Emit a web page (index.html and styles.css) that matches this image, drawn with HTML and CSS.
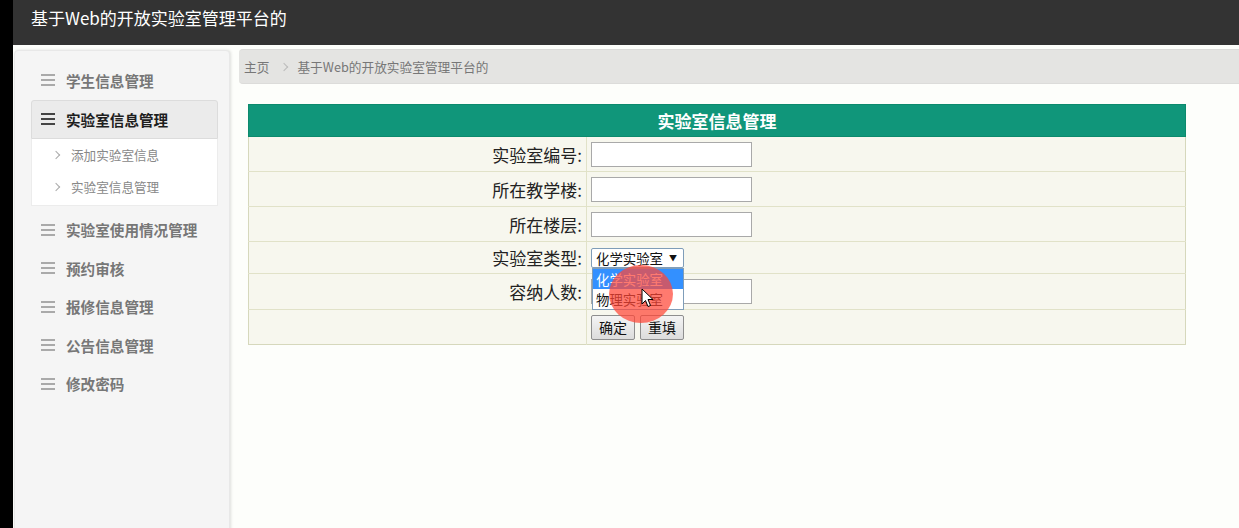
FILE: index.html
```html
<!DOCTYPE html>
<html lang="zh-CN">
<head>
<meta charset="utf-8">
<title>基于Web的开放实验室管理平台的</title>
<link rel="stylesheet" href="styles.css">
</head>
<body>
<div class="app">
  <header class="topbar">基于Web的开放实验室管理平台的</header>
  <div class="body-row">
    <aside class="sidebar">
      <div class="menu-item"><span class="bars"><i></i><i></i><i></i></span>学生信息管理</div>
      <div class="menu-item active"><span class="bars"><i></i><i></i><i></i></span>实验室信息管理</div>
      <div class="submenu">
        <div class="sub-item"><span class="chev"></span>添加实验室信息</div>
        <div class="sub-item"><span class="chev"></span>实验室信息管理</div>
      </div>
      <div class="menu-item after-sub"><span class="bars"><i></i><i></i><i></i></span>实验室使用情况管理</div>
      <div class="menu-item"><span class="bars"><i></i><i></i><i></i></span>预约审核</div>
      <div class="menu-item"><span class="bars"><i></i><i></i><i></i></span>报修信息管理</div>
      <div class="menu-item"><span class="bars"><i></i><i></i><i></i></span>公告信息管理</div>
      <div class="menu-item"><span class="bars"><i></i><i></i><i></i></span>修改密码</div>
    </aside>
    <main class="main">
      <div class="crumb"><span class="crumb-home">主页</span><span class="crumb-sep"></span><span class="crumb-cur">基于Web的开放实验室管理平台的</span></div>
      <table class="form-table">
        <tr><th colspan="2" class="title">实验室信息管理</th></tr>
        <tr class="r35"><td class="label">实验室编号:</td><td class="field"><input class="txt" type="text"></td></tr>
        <tr class="r35"><td class="label">所在教学楼:</td><td class="field"><input class="txt" type="text"></td></tr>
        <tr class="r35"><td class="label">所在楼层:</td><td class="field"><input class="txt" type="text"></td></tr>
        <tr class="r32"><td class="label">实验室类型:</td><td class="field">
          <div class="select-wrap">
            <div class="select">化学实验室<span class="arrow">▼</span></div>
            <div class="options">
              <div class="opt sel">化学实验室</div>
              <div class="opt">物理实验室</div>
            </div>
            <div class="click-dot"></div>
            <svg class="cursor" width="14" height="20" viewBox="0 0 14 20"><path d="M1 1 L1 16 L4.5 12.5 L7 18.5 L9.5 17.5 L7 11.5 L12 11.5 Z" fill="#fff" stroke="#000" stroke-width="1"/></svg>
          </div>
        </td></tr>
        <tr class="r36"><td class="label">容纳人数:</td><td class="field"><input class="txt" type="text"></td></tr>
        <tr class="r35"><td class="label"></td><td class="field"><button class="btn">确定</button><button class="btn">重填</button></td></tr>
      </table>
    </main>
  </div>
</div>
</body>
</html>
```
FILE: styles.css
```css
* { box-sizing: border-box; }
html, body { margin: 0; padding: 0; }
body {
  background: #000;
  font-family: "Noto Sans CJK SC", "Noto Sans", sans-serif;
  width: 1239px;
  height: 528px;
  overflow: hidden;
}
.app {
  margin-left: 13px;
  height: 528px;
  background: #fdfefb;
}
.topbar {
  height: 45px;
  background: #333333;
  color: #fff;
  font-size: 17px;
  line-height: 36px;
  padding-left: 18px;
}
.body-row {
  display: flex;
  align-items: flex-start;
}
.sidebar {
  width: 216px;
  height: 490px;
  margin-top: 5px;
  margin-left: 1px;
  background: #f5f5f5;
  border: 1px solid #e8e8e8;
  border-radius: 4px;
  box-shadow: 1px 0 3px rgba(0,0,0,0.12);
  padding: 10px 11px 0 16px;
}
.menu-item {
  height: 38.5px;
  display: flex;
  align-items: center;
  padding-left: 10px;
  font-size: 14.6px;
  font-weight: bold;
  color: #777;
}
.menu-item.after-sub { margin-top: 5px; }
.menu-item.active {
  height: 39px;
  background: #ebebeb;
  border: 1px solid #dcdcdc;
  border-radius: 3px 3px 0 0;
  color: #1e1e1e;
  padding-left: 9px;
}
.bars {
  width: 14px;
  display: flex;
  flex-direction: column;
  gap: 3px;
  margin-right: 11px;
}
.bars i {
  display: block;
  height: 2px;
  background: #aaa;
}
.menu-item.active .bars i { background: #444; }
.submenu {
  background: #fff;
  border: 1px solid #ececec;
  border-top: none;
  padding-bottom: 2px;
}
.sub-item {
  height: 32px;
  display: flex;
  align-items: center;
  padding-left: 21px;
  font-size: 12.6px;
  color: #888;
}
.chev {
  width: 6px;
  height: 6px;
  border-right: 1.5px solid #aaa;
  border-top: 1.5px solid #aaa;
  transform: rotate(45deg);
  margin-right: 12px;
}
.main {
  flex: 1;
  margin-left: 9px;
  margin-top: 4px;
}
.crumb {
  height: 35px;
  background: #e4e4e2;
  border-top: 1px solid #dcdcda;
  border-bottom: 1px solid #dcdcda;
  border-radius: 4px 0 0 4px;
  display: flex;
  align-items: center;
  padding-left: 5px;
  font-size: 12.7px;
  color: #777;
}
.crumb-sep {
  width: 6px;
  height: 6px;
  border-right: 1px solid #bbb;
  border-top: 1px solid #bbb;
  transform: rotate(45deg);
  margin: 0 10px 0 12px;
}
.crumb-cur { color: #777; }
.form-table {
  margin: 20px 0 0 9px;
  width: 938px;
  border-collapse: collapse;
  border: 1px solid #d6d8bc;
}
.form-table td {
  border-top: 1px solid #e1e2c8;
  background: #f7f7ee;
  padding: 0;
}
.form-table th.title {
  height: 32px;
  background: #10967a;
  color: #fff;
  font-size: 17px;
  font-weight: bold;
  border: 1px solid #0c8a6d;
}
.r35 td { height: 35px; }
.r32 td { height: 32px; }
.r36 td { height: 36px; }
.label {
  width: 338px;
  text-align: right;
  padding-right: 4px !important;
  font-size: 17px;
  color: #222;
  border-right: 1px solid #e1e2c8;
}
.field {
  padding-left: 4px !important;
  vertical-align: middle;
}
.txt {
  display: block;
  width: 161px;
  height: 25px;
  border: 1px solid #a9a9a9;
  background: #fff;
  margin: 0;
  padding: 0;
}
.select-wrap {
  position: relative;
  width: 93px;
  height: 20px;
}
.select {
  width: 93px;
  height: 20px;
  border: 1px solid #7f9db9;
  border-radius: 2px;
  background: #fff;
  font-size: 13.4px;
  color: #111;
  line-height: 18px;
  padding-left: 4px;
  display: flex;
  align-items: center;
}
.arrow {
  font-size: 8px;
  margin-left: 6px;
}
.options {
  position: absolute;
  left: 1px;
  top: 20px;
  width: 92px;
  height: 42px;
  border: 1px solid #7f9db9;
  background: #fff;
  z-index: 2;
}
.opt {
  height: 20px;
  line-height: 20px;
  font-size: 13.4px;
  padding-left: 3px;
  color: #111;
}
.opt.sel { background: #3390ff; color: #fff; }
.click-dot {
  position: absolute;
  left: 18px;
  top: 17px;
  width: 64px;
  height: 58px;
  border-radius: 50%;
  background: rgba(255, 70, 55, 0.72);
  z-index: 3;
}
.cursor {
  position: absolute;
  left: 50px;
  top: 40px;
  z-index: 4;
}
.btn {
  height: 25px;
  padding: 0 7px;
  font-family: "Noto Sans CJK SC", sans-serif;
  font-size: 14px;
  color: #111;
  border: 1px solid #8e8e8e;
  border-radius: 2px;
  background: linear-gradient(#f4f4f4, #dcdcdc);
  margin-right: 5px;
  line-height: 21px;
}
```
